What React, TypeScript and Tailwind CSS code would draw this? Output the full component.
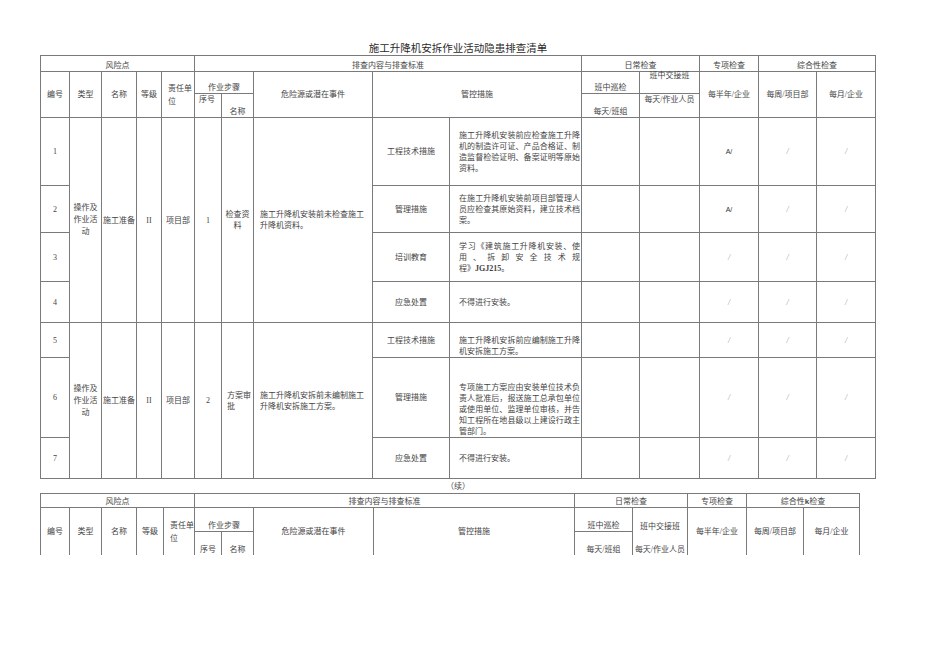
import React from "react";

type Kids = { className?: string; children?: React.ReactNode; bb?: boolean };

// one grid cell: right + bottom rule, the table wrapper draws left + top
function Cell({ className = "", children, bb = true }: Kids) {
  const rule = bb ? "border-r border-b border-[#7a7a7a]" : "border-r border-[#7a7a7a]";
  return (
    <div className={`${rule} ${className}`}>
      <div>{children}</div>
    </div>
  );
}

const mid = "flex items-center justify-center text-center whitespace-nowrap";
const bot = "flex items-end justify-center text-center whitespace-nowrap";
const top = "flex items-start justify-center text-center whitespace-nowrap";

function Lines({ lines }: { lines: React.ReactNode[] }) {
  return (
    <div className="w-full">
      {lines.map((l, i) => (
        <div
          key={i}
          className={
            i < lines.length - 1
              ? "whitespace-nowrap text-justify [text-align-last:justify]"
              : "whitespace-nowrap text-left"
          }
        >
          {l}
        </div>
      ))}
    </div>
  );
}

function Mark({ v }: { v: string }) {
  if (v === "A/") return <span className="text-[7px] text-[#333] font-['Liberation_Sans',sans-serif]">A/</span>;
  return <span className="text-[8px] text-[#9a9a9a] italic">/</span>;
}

const body: { n: string; cat: string; lines: React.ReactNode[]; end?: boolean; m: string[] }[] = [
  {
    n: "1",
    cat: "工程技术措施",
    lines: ["施工升降机安装前应检查施工升降", "机的制造许可证、产品合格证、制", "造监督检验证明、备案证明等原始", "资料。"],
    m: ["A/", "/", "/"],
  },
  {
    n: "2",
    cat: "管理措施",
    lines: ["在施工升降机安装前项目部管理人", "员应检查其原始资料，建立技术档", "案。"],
    m: ["A/", "/", "/"],
  },
  {
    n: "3",
    cat: "培训教育",
    lines: [
      "学习《建筑施工升降机安装、使",
      "用、拆卸安全技术规",
      <>
        程》<b className="font-bold">JGJ215</b>。
      </>,
    ],
    m: ["/", "/", "/"],
  },
  { n: "4", cat: "应急处置", lines: ["不得进行安装。"], m: ["/", "/", "/"] },
  { n: "5", cat: "工程技术措施", lines: ["施工升降机安拆前应编制施工升降", "机安拆施工方案。"], end: true, m: ["/", "/", "/"] },
  {
    n: "6",
    cat: "管理措施",
    lines: [
      "专项施工方案应由安装单位技术负",
      "责人批准后，报送施工总承包单位",
      "或使用单位、监理单位审核，并告",
      "知工程所在地县级以上建设行政主",
      "管部门。",
    ],
    end: true,
    m: ["/", "/", "/"],
  },
  { n: "7", cat: "应急处置", lines: ["不得进行安装。"], m: ["/", "/", "/"] },
];

function Group({ span, num, step, stepLeft, danger }: { span: string; num: string; step: string[]; stepLeft?: boolean; danger: string[] }) {
  return (
    <>
      <Cell className={`${mid} ${span} leading-[12px]`}>
        操作及
        <br />
        作业活
        <br />动
      </Cell>
      <Cell className={`${mid} ${span}`}>施工准备</Cell>
      <Cell className={`${mid} ${span}`}>II</Cell>
      <Cell className={`${mid} ${span}`}>项目部</Cell>
      <Cell className={`${mid} ${span}`}>{num}</Cell>
      <Cell
        className={
          stepLeft
            ? `flex items-center justify-start text-left pl-[5px] ${span}`
            : `${mid} ${span}`
        }
      >
        {step[0]}
        <br />
        {step[1]}
      </Cell>
      <Cell className={`flex items-center justify-start text-left pl-[6px] whitespace-nowrap ${span}`}>
        {danger[0]}
        <br />
        {danger[1]}
      </Cell>
    </>
  );
}

function MainTable() {
  return (
    <div className="grid w-[836px] grid-cols-[29px_32px_35px_25px_33px_27px_32px_119px_77px_132px_58px_60px_59px_58px_59px] grid-rows-[16px_22px_24px_68px_47px_49px_41px_35px_80px_41px] border-l border-t border-[#7a7a7a]">
      <Cell className={`${bot} col-span-5`}>风险点</Cell>
      <Cell className={`${bot} col-span-5`}>排查内容与排查标准</Cell>
      <Cell className={`${bot} col-span-2`}>日常检查</Cell>
      <Cell className={bot}>专项检查</Cell>
      <Cell className={`${bot} col-span-2`}>综合性检查</Cell>

      <Cell className={`${mid} row-span-2`}>编号</Cell>
      <Cell className={`${mid} row-span-2`}>类型</Cell>
      <Cell className={`${mid} row-span-2`}>名称</Cell>
      <Cell className={`${mid} row-span-2`}>等级</Cell>
      <Cell className="flex items-center justify-start text-left pl-[6px] row-span-2 leading-[13px]">
        责任单
        <br />位
      </Cell>
      <Cell className={`${bot} col-span-2`}>作业步骤</Cell>
      <Cell className={`${mid} row-span-2`}>危险源或潜在事件</Cell>
      <Cell className={`${mid} col-span-2 row-span-2`}>管控措施</Cell>
      <Cell className={bot}>班中巡检</Cell>
      <Cell className={`${top} leading-[8px]`}>班中交接班</Cell>
      <Cell className={`${mid} row-span-2`}>每半年/企业</Cell>
      <Cell className={`${mid} row-span-2`}>每周/项目部</Cell>
      <Cell className={`${mid} row-span-2`}>每月/企业</Cell>

      <Cell className="flex items-start justify-start pl-[4px] whitespace-nowrap">序号</Cell>
      <Cell className={bot}>名称</Cell>
      <Cell className={bot}>每天/班组</Cell>
      <Cell className={top}>每天/作业人员</Cell>

      {body.map((r, i) => (
        <React.Fragment key={r.n}>
          <Cell className={mid}>{r.n}</Cell>
          {i === 0 && (
            <Group
              span="row-span-4"
              num="1"
              step={["检查资", "料"]}
              danger={["施工升降机安装前未检查施工", "升降机资料。"]}
            />
          )}
          {i === 4 && (
            <Group
              span="row-span-3"
              num="2"
              step={["方案审", "批"]}
              stepLeft
              danger={["施工升降机安拆前未编制施工", "升降机安拆施工方案。"]}
            />
          )}
          <Cell className={mid}>{r.cat}</Cell>
          <div
            className={
              r.end
                ? "flex items-end pl-[9px] pr-[1px] border-r border-b border-[#7a7a7a]"
                : "flex items-center pl-[9px] pr-[1px] border-r border-b border-[#7a7a7a]"
            }
          >
            <Lines lines={r.lines} />
          </div>
          <Cell />
          <Cell />
          {r.m.map((v, j) => (
            <Cell key={j} className={mid}>
              <Mark v={v} />
            </Cell>
          ))}
        </React.Fragment>
      ))}
    </div>
  );
}

function ContTable() {
  return (
    <div className="grid w-[820px] grid-cols-[29px_32px_35px_27px_31px_27px_32px_120px_201px_58px_55px_59px_57px_56px] grid-rows-[14px_24px_23px] border-l border-t border-[#7a7a7a]">
      <Cell className={`${bot} col-span-5`}>风险点</Cell>
      <Cell className={`${bot} col-span-4`}>排查内容与排查标准</Cell>
      <Cell className={`${bot} col-span-2`}>日常检查</Cell>
      <Cell className={bot}>专项检查</Cell>
      <Cell className={`${bot} col-span-2`}>
        综合性<b className="font-bold font-['Liberation_Sans',sans-serif]">k</b>检查
      </Cell>

      <Cell bb={false} className={`${mid} row-span-2`}>编号</Cell>
      <Cell bb={false} className={`${mid} row-span-2`}>类型</Cell>
      <Cell bb={false} className={`${mid} row-span-2`}>名称</Cell>
      <Cell bb={false} className={`${mid} row-span-2`}>等级</Cell>
      <Cell bb={false} className="flex items-center justify-start text-left pl-[6px] row-span-2 leading-[13px]">
        责任单
        <br />位
      </Cell>
      <Cell className={`${bot} col-span-2`}>作业步骤</Cell>
      <Cell bb={false} className={`${mid} row-span-2`}>危险源或潜在事件</Cell>
      <Cell bb={false} className={`${mid} row-span-2`}>管控措施</Cell>
      <Cell className={bot}>班中巡检</Cell>
      <Cell bb={false} className={bot}>班中交接班</Cell>
      <Cell bb={false} className={`${mid} row-span-2`}>每半年/企业</Cell>
      <Cell bb={false} className={`${mid} row-span-2`}>每周/项目部</Cell>
      <Cell bb={false} className={`${mid} row-span-2`}>每月/企业</Cell>

      <Cell bb={false} className={bot}>序号</Cell>
      <Cell bb={false} className={bot}>名称</Cell>
      <Cell bb={false} className={bot}>每天/班组</Cell>
      <Cell bb={false} className={bot}>每天/作业人员</Cell>
    </div>
  );
}

export default function App() {
  return (
    <div className="min-h-screen bg-white pl-[40px] pt-[43px] font-['Liberation_Serif','Noto_Sans_CJK_SC',serif] text-[8px] leading-[11px] text-[#444]">
      <div className="w-[836px] text-center text-[10.5px] leading-[12px] text-[#2a2a2a]">施工升降机安拆作业活动隐患排查清单</div>
      <MainTable />
      <div className="flex h-[14px] w-[836px] items-center justify-center">（续）</div>
      <ContTable />
    </div>
  );
}
